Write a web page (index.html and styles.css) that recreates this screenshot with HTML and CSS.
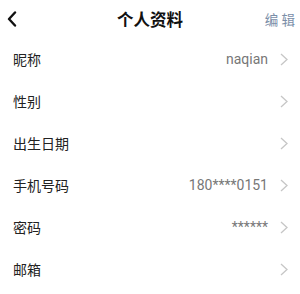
FILE: index.html
```html
<!DOCTYPE html>
<html lang="zh-CN">
<head>
<meta charset="utf-8">
<title>个人资料</title>
<link rel="stylesheet" href="styles.css">
</head>
<body>
<div class="page">
  <header class="bar">
    <span class="back">
      <svg width="10" height="16" viewBox="0 0 10 16"><path d="M8 1.5 L2 8 L8 14.5" fill="none" stroke="#111" stroke-width="2.4" stroke-linecap="round" stroke-linejoin="round"/></svg>
    </span>
    <h1 class="title">个人资料</h1>
    <span class="edit">编 辑</span>
  </header>
  <ul class="list">
    <li class="row"><span class="label">昵称</span><span class="value">naqian</span><svg class="arrow" width="8" height="13" viewBox="0 0 8 13"><path d="M1 1 L7 6.5 L1 12" fill="none" stroke="#c6c6c6" stroke-width="1.3"/></svg></li>
    <li class="row"><span class="label">性别</span><span class="value"></span><svg class="arrow" width="8" height="13" viewBox="0 0 8 13"><path d="M1 1 L7 6.5 L1 12" fill="none" stroke="#c6c6c6" stroke-width="1.3"/></svg></li>
    <li class="row"><span class="label">出生日期</span><span class="value"></span><svg class="arrow" width="8" height="13" viewBox="0 0 8 13"><path d="M1 1 L7 6.5 L1 12" fill="none" stroke="#c6c6c6" stroke-width="1.3"/></svg></li>
    <li class="row"><span class="label">手机号码</span><span class="value">180****0151</span><svg class="arrow" width="8" height="13" viewBox="0 0 8 13"><path d="M1 1 L7 6.5 L1 12" fill="none" stroke="#c6c6c6" stroke-width="1.3"/></svg></li>
    <li class="row"><span class="label">密码</span><span class="value">******</span><svg class="arrow" width="8" height="13" viewBox="0 0 8 13"><path d="M1 1 L7 6.5 L1 12" fill="none" stroke="#c6c6c6" stroke-width="1.3"/></svg></li>
    <li class="row"><span class="label">邮箱</span><span class="value"></span><svg class="arrow" width="8" height="13" viewBox="0 0 8 13"><path d="M1 1 L7 6.5 L1 12" fill="none" stroke="#c6c6c6" stroke-width="1.3"/></svg></li>
  </ul>
</div>
</body>
</html>
```
FILE: styles.css
```css
* { box-sizing: border-box; }
html, body { margin: 0; padding: 0; background: #fff; }
body { font-family: Roboto, "Noto Sans CJK SC", sans-serif; color: #222; }
.page { width: 300px; }
.bar {
  height: 38px;
  display: flex;
  align-items: center;
  justify-content: space-between;
  padding: 0 5px 0 7px;
  position: relative;
}
.back { display: flex; align-items: center; width: 20px; }
.title {
  margin: 0;
  position: absolute;
  left: 0; right: 0;
  text-align: center;
  font-size: 16.5px;
  font-weight: 700;
  color: #111;
  pointer-events: none;
}
.edit { font-size: 13.5px; color: #7a8ea8; white-space: pre; }
.list { list-style: none; margin: 0; padding: 0; }
.row {
  height: 42px;
  display: flex;
  align-items: center;
  padding: 0 12px 0 13px;
}
.label { font-size: 14px; color: #222; flex: 1; }
.value { font-size: 14px; color: #777; margin-right: 12px; }
.arrow { display: block; }
```
